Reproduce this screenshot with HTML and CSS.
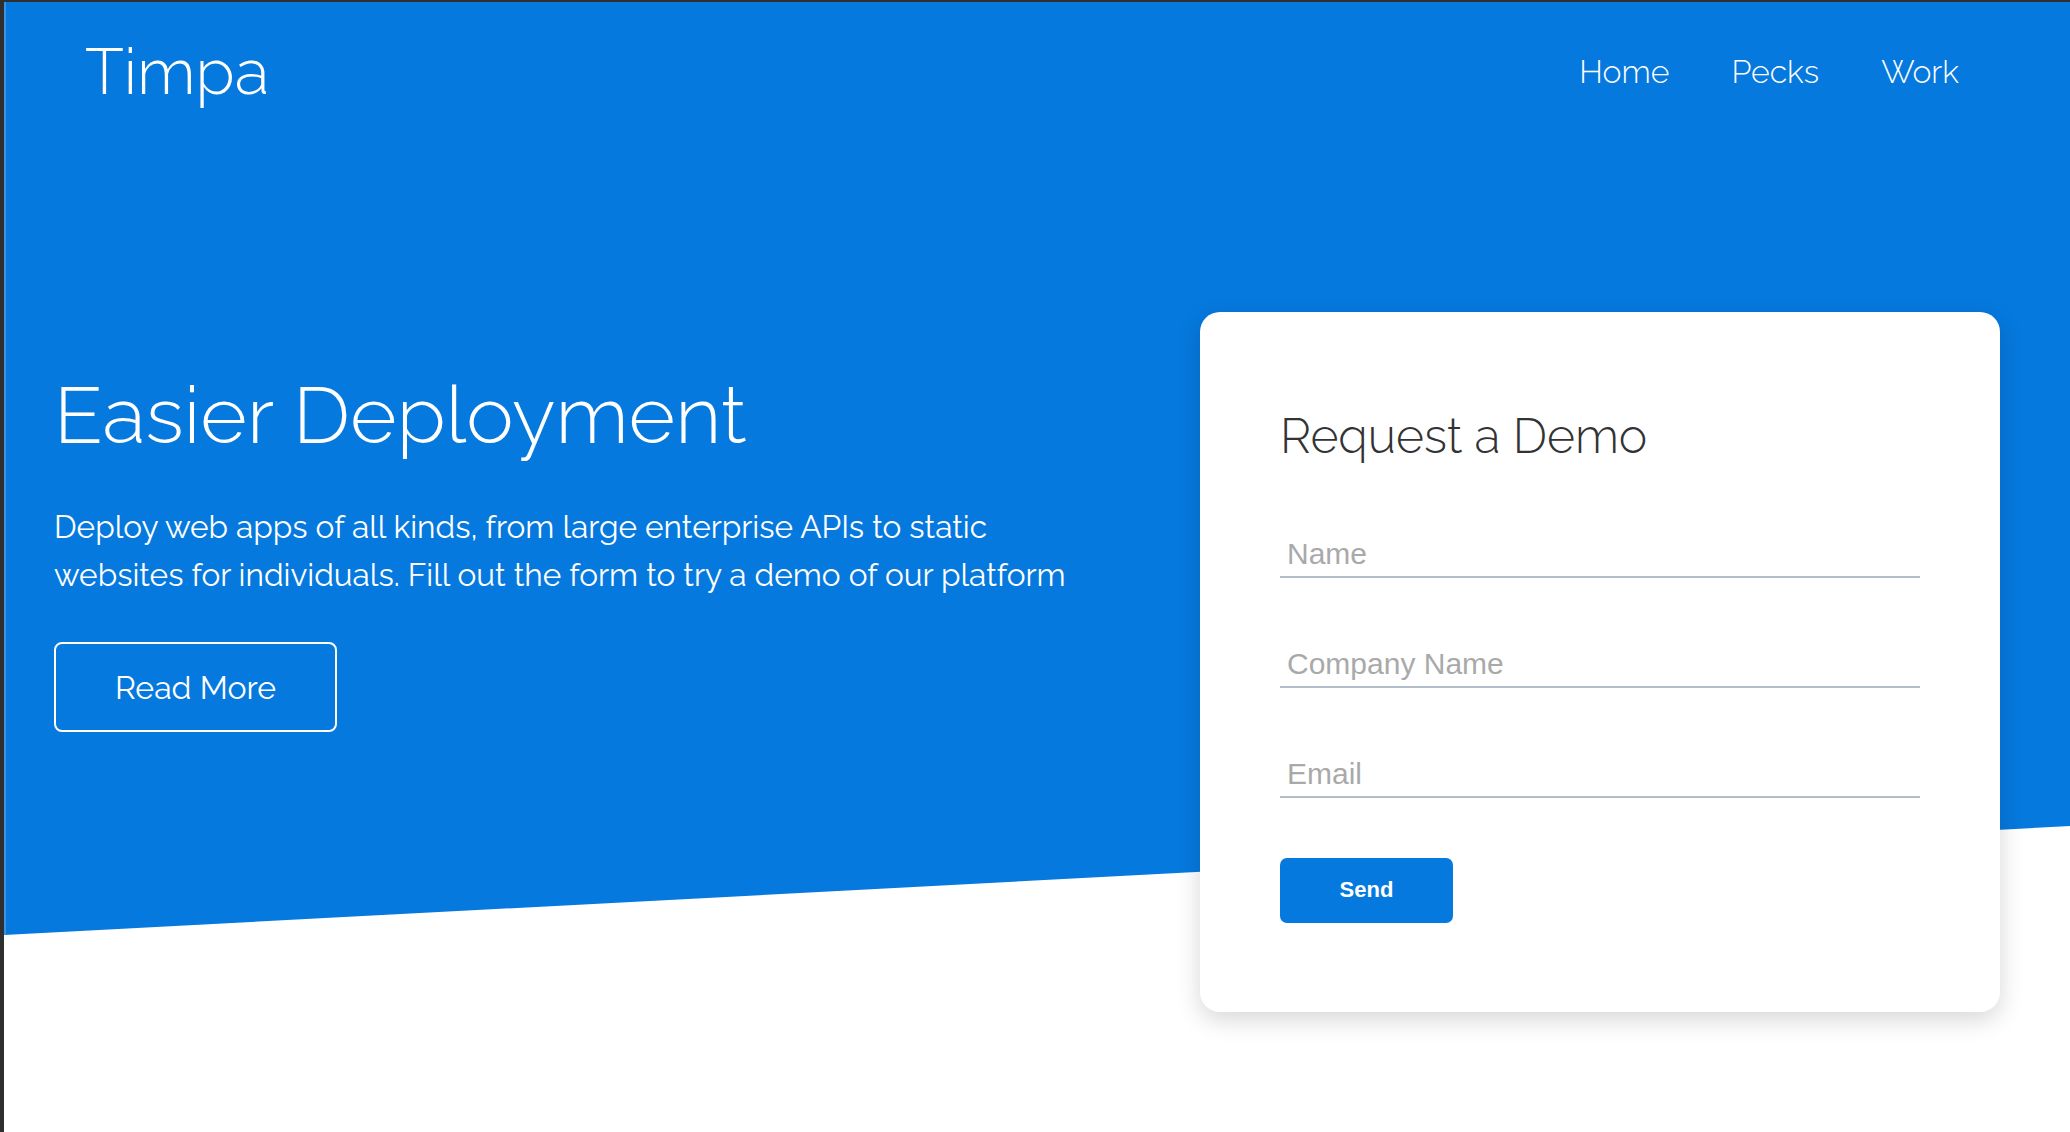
FILE: index.html
```html
<!DOCTYPE html>
<html lang="en">
<head>
<meta charset="utf-8">
<title>Timpa</title>
<link rel="stylesheet" href="styles.css">
</head>
<body>
<div class="page">
  <header class="header">
    <a class="logo" href="#">Timpa</a>
    <nav class="nav">
      <a href="#">Home</a>
      <a href="#">Pecks</a>
      <a href="#">Work</a>
    </nav>
  </header>
  <main class="hero">
    <section class="intro">
      <h1 class="intro-title">Easier Deployment</h1>
      <p class="intro-text">Deploy web apps of all kinds, from large enterprise APIs to static websites for individuals. Fill out the form to try a demo of our platform</p>
      <a class="btn-outline" href="#">Read More</a>
    </section>
    <form class="card">
      <h2 class="card-title">Request a Demo</h2>
      <input class="field" type="text" placeholder="Name">
      <input class="field" type="text" placeholder="Company Name">
      <input class="field" type="email" placeholder="Email">
      <button class="btn-send" type="button">Send</button>
    </form>
  </main>
</div>
</body>
</html>
```

FILE: styles.css
```css
* { box-sizing: border-box; }

html, body { height: 100%; }

body {
  margin: 0;
  background: #ffffff;
  border-top: 2px solid #2f2f2f;
  border-left: 4px solid #2f2f2f;
  font-family: Raleway, Lato, "Open Sans", sans-serif;
  color: #ffffff;
  overflow: hidden;
}

.page {
  position: relative;
  height: 100%;
}

.page::before {
  content: "";
  position: absolute;
  left: 0;
  top: 0;
  right: 0;
  height: 933px;
  background: #0679de;
  border-left: 2px solid #3c92e4;
  clip-path: polygon(0 0, 100% 0, 100% 824px, 0 933px);
  z-index: 0;
}

.header {
  position: relative;
  z-index: 1;
  height: 140px;
  display: flex;
  align-items: center;
  justify-content: space-between;
  padding: 0 111px 0 81px;
}

.logo {
  color: #ffffff;
  text-decoration: none;
  font-size: 64px;
  font-weight: 300;
  line-height: 1;
}

.nav {
  display: flex;
  gap: 62px;
}

.nav a {
  color: #ffffff;
  text-decoration: none;
  font-size: 32px;
  font-weight: 300;
  line-height: 1;
}

.hero {
  position: relative;
  z-index: 1;
  display: flex;
  align-items: flex-start;
  justify-content: space-between;
  padding: 0 70px 0 50px;
}

.intro {
  padding-top: 225px;
  max-width: 1040px;
}

.intro-title {
  margin: 0;
  font-size: 80px;
  font-weight: 300;
  line-height: 1.2;
}

.intro-text {
  margin: 40px 0 0;
  font-size: 31.6px;
  line-height: 48px;
  font-weight: 400;
}

.btn-outline {
  margin-top: 43px;
  display: flex;
  align-items: center;
  justify-content: center;
  width: 283px;
  height: 90px;
  border: 2px solid #ffffff;
  border-radius: 8px;
  color: #ffffff;
  text-decoration: none;
  font-size: 32px;
}

.card {
  margin-top: 170px;
  width: 800px;
  flex: none;
  background: #ffffff;
  border-radius: 20px;
  box-shadow: 0 8px 24px rgba(0, 0, 0, 0.16);
  padding: 96px 80px 89px;
  display: flex;
  flex-direction: column;
  align-items: stretch;
}

.card-title {
  margin: 0;
  font-size: 48px;
  font-weight: 300;
  line-height: 1.2;
  color: #333333;
}

.field {
  margin-top: 58px;
  height: 52px;
  padding: 6px 7px 0;
  border: none;
  border-bottom: 2px solid #b3bdc9;
  background: transparent;
  font-family: "Liberation Sans", Arial, sans-serif;
  font-size: 30px;
  color: #333333;
  outline: none;
}

.card-title + .field { margin-top: 60px; }

.field::placeholder {
  color: #a9a9a9;
}

.btn-send {
  margin-top: 60px;
  align-self: flex-start;
  width: 173px;
  height: 65px;
  border: none;
  border-radius: 7px;
  background: #0679de;
  color: #ffffff;
  font-family: "Liberation Sans", Arial, sans-serif;
  font-size: 22px;
  font-weight: 700;
  cursor: pointer;
}
```
